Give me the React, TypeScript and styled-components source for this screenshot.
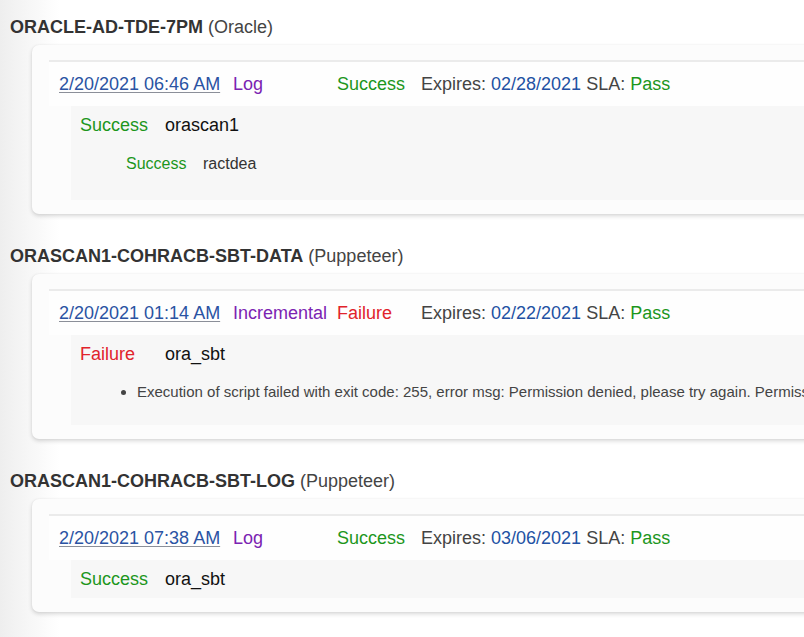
import React from "react";
import styled, { createGlobalStyle } from "styled-components";

const GlobalStyle = createGlobalStyle`
  html, body { margin: 0; padding: 0; }
  body {
    width: 804px;
    height: 637px;
    overflow: hidden;
    background: linear-gradient(to right, #eeeeee 0px, #f3f3f3 16px, #f8f8f8 34px, #fdfdfd 52px, #ffffff 60px);
    font-family: "Liberation Sans", Arial, Helvetica, sans-serif;
    color: #333;
  }
`;

const Page = styled.div`
  padding-left: 10px;
`;

const Section = styled.section`
  padding: 16px 0 15px;
`;

const Title = styled.div`
  font-size: 18px;
  line-height: 22px;
  color: #333;
  white-space: nowrap;
`;

const Name = styled.span`
  font-weight: bold;
`;

const Kind = styled.span`
  color: #444;
`;

const Card = styled.div`
  margin: 7px 0 0 22px;
  width: 1000px;
  box-sizing: border-box;
  padding: 15px 0 14px 17px;
  background: #fcfcfc;
  border-radius: 7px;
  box-shadow: 0 2px 4px rgba(0, 0, 0, 0.16), 0 0 2px rgba(0, 0, 0, 0.06);
`;

const Divider = styled.div`
  height: 2px;
  background: #ebebeb;
`;

const Run = styled.div`
  display: grid;
  grid-template-columns: 174px 104px 84px auto;
  align-items: center;
  height: 44px;
  padding-left: 10px;
  background: #fefefe;
  font-size: 18px;
  white-space: nowrap;
`;

const DateLink = styled.a`
  color: #2a53a3;
  text-decoration: underline;
  text-decoration-color: #8b8f99;
  text-underline-offset: 2px;
`;

const Purple = styled.span`
  color: #7b23b2;
`;

const Status = styled.span<{ $ok: boolean }>`
  color: ${(p) => (p.$ok ? "#1c961c" : "#e1232b")};
`;

const Meta = styled.span`
  color: #444;
`;

const Blue = styled.span`
  color: #2251a3;
`;

const Details = styled.div`
  margin-left: 22px;
  background: #f7f7f7;
`;

const Entry = styled.div<{ $last?: boolean }>`
  display: grid;
  grid-template-columns: 85px auto;
  align-items: center;
  height: 38px;
  padding-left: 9px;
  font-size: 18px;
  white-space: nowrap;
`;

const Host = styled.span`
  color: #111;
`;

const Nested = styled.div`
  padding: 0 0 16px 55px;
`;

const SubEntry = styled.div`
  display: grid;
  grid-template-columns: 77px auto;
  align-items: center;
  height: 40px;
  font-size: 16px;
  white-space: nowrap;
`;

const SubName = styled.span`
  color: #333;
`;

const Messages = styled.ul`
  margin: 0;
  padding: 10px 0 24px 66px;
  font-size: 15px;
  line-height: 18px;
  color: #444;
  white-space: nowrap;
`;

type Job = {
  name: string;
  kind: string;
  date: string;
  type: string;
  ok: boolean;
  expires: string;
  host: string;
  sub?: string;
  message?: string;
};

const jobs: Job[] = [
  {
    name: "ORACLE-AD-TDE-7PM",
    kind: "Oracle",
    date: "2/20/2021 06:46 AM",
    type: "Log",
    ok: true,
    expires: "02/28/2021",
    host: "orascan1",
    sub: "ractdea",
  },
  {
    name: "ORASCAN1-COHRACB-SBT-DATA",
    kind: "Puppeteer",
    date: "2/20/2021 01:14 AM",
    type: "Incremental",
    ok: false,
    expires: "02/22/2021",
    host: "ora_sbt",
    message:
      "Execution of script failed with exit code: 255, error msg: Permission denied, please try again. Permission denied, please try again.",
  },
  {
    name: "ORASCAN1-COHRACB-SBT-LOG",
    kind: "Puppeteer",
    date: "2/20/2021 07:38 AM",
    type: "Log",
    ok: true,
    expires: "03/06/2021",
    host: "ora_sbt",
  },
];

export default function App() {
  return (
    <>
      <GlobalStyle />
      <Page>
        {jobs.map((j) => (
          <Section key={j.name}>
            <Title>
              <Name>{j.name}</Name> <Kind>({j.kind})</Kind>
            </Title>
            <Card>
              <Divider />
              <Run>
                <span>
                  <DateLink href="#">{j.date}</DateLink>
                </span>
                <Purple>{j.type}</Purple>
                <Status $ok={j.ok}>{j.ok ? "Success" : "Failure"}</Status>
                <Meta>
                  Expires: <Blue>{j.expires}</Blue> SLA: <Status $ok>Pass</Status>
                </Meta>
              </Run>
              <Details>
                <Entry>
                  <Status $ok={j.ok}>{j.ok ? "Success" : "Failure"}</Status>
                  <Host>{j.host}</Host>
                </Entry>
                {j.sub && (
                  <Nested>
                    <SubEntry>
                      <Status $ok>Success</Status>
                      <SubName>{j.sub}</SubName>
                    </SubEntry>
                  </Nested>
                )}
                {j.message && (
                  <Messages>
                    <li>{j.message}</li>
                  </Messages>
                )}
              </Details>
            </Card>
          </Section>
        ))}
      </Page>
    </>
  );
}
